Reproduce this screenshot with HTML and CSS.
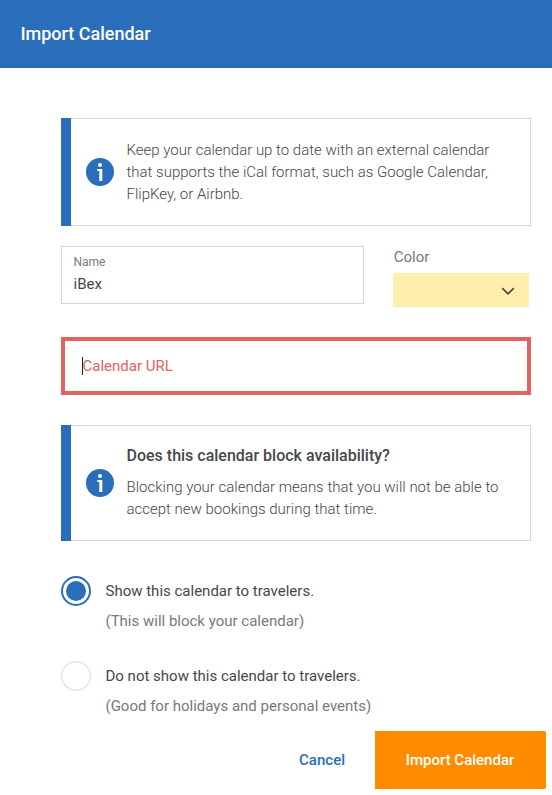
FILE: index.html
```html
<!DOCTYPE html>
<html lang="en">
<head>
    <meta charset="UTF-8">
    <meta name="viewport" content="width=device-width, initial-scale=1.0">
    <title>Import Calendar</title>
    <link rel="stylesheet" href="styles.css">
</head>
<body>
    <header class="modal-header">
        <h1>Import Calendar</h1>
    </header>

    <form class="modal-body">
        <div class="notice">
            <svg class="info-icon" viewBox="0 0 28 28">
                <circle cx="14" cy="14" r="14" fill="#2a6ebb"/>
                <circle cx="14" cy="7.1" r="2" fill="#fff"/>
                <path d="M11.3 11H16.3V23H13.3V13H11.3Z" fill="#fff"/>
            </svg>
            <p>Keep your calendar up to date with an external calendar that supports the iCal format, such as Google Calendar, FlipKey, or Airbnb.</p>
        </div>

        <div class="row">
            <div class="field">
                <label for="name">Name</label>
                <input type="text" id="name" value="iBex">
            </div>
            <div class="color">
                <span class="color-label">Color</span>
                <button type="button" class="color-select" aria-label="Color">
                    <svg width="14" height="8" viewBox="0 0 14 8">
                        <path d="M1.2 1.2L7 6.8L12.8 1.2" fill="none" stroke="#4a4340" stroke-width="1.6"/>
                    </svg>
                </button>
            </div>
        </div>

        <div class="url-field">
            <span class="caret"></span>
            <input type="text" placeholder="Calendar URL">
        </div>

        <div class="notice notice-block">
            <svg class="info-icon" viewBox="0 0 28 28">
                <circle cx="14" cy="14" r="14" fill="#2a6ebb"/>
                <circle cx="14" cy="7.1" r="2" fill="#fff"/>
                <path d="M11.3 11H16.3V23H13.3V13H11.3Z" fill="#fff"/>
            </svg>
            <div>
                <h2>Does this calendar block availability?</h2>
                <p>Blocking your calendar means that you will not be able to accept new bookings during that time.</p>
            </div>
        </div>

        <label class="option">
            <input type="radio" name="visibility" checked>
            <span class="option-text">
                <span>Show this calendar to travelers.</span>
                <span class="hint">(This will block your calendar)</span>
            </span>
        </label>
        <label class="option">
            <input type="radio" name="visibility">
            <span class="option-text">
                <span>Do not show this calendar to travelers.</span>
                <span class="hint">(Good for holidays and personal events)</span>
            </span>
        </label>
    </form>

    <footer class="modal-footer">
        <button type="button" class="btn-cancel">Cancel</button>
        <button type="button" class="btn-import">Import Calendar</button>
    </footer>
</body>
</html>
```

FILE: styles.css
```css
* {
    box-sizing: border-box;
}
body {
    margin: 0;
    background: #fff;
    color: #44484c;
    font-family: Roboto, sans-serif;
    font-size: 15px;
    line-height: 22px;
}
h1, h2, p {
    margin: 0;
}
input, button {
    font: inherit;
    color: inherit;
    border: 0;
    padding: 0;
    background: none;
}
.modal-header {
    display: flex;
    align-items: center;
    height: 68px;
    padding: 0 20.4px;
    background: #2a6ebb;
    color: #fff;
}
.modal-header h1 {
    font-size: 18px;
    font-weight: 500;
}
.modal-body {
    padding: 50px 21px 0 61px;
}
.notice {
    display: flex;
    align-items: center;
    gap: 12.5px;
    height: 108px;
    padding-right: 28px;
    border: 1px solid #d4d6d8;
    border-left: 0;
    font-weight: 300;
}
.notice::before {
    content: '';
    flex: none;
    align-self: stretch;
    width: 10px;
    margin: -1px 2.5px -1px 0;
    background: #2a6ebb;
}
.notice-block {
    height: 116px;
    margin-bottom: 35px;
}
.notice h2 {
    margin-bottom: 9px;
    padding-bottom: 1px;
    font-size: 16px;
    font-weight: 500;
    line-height: 22px;
}
.notice-block p {
    margin: -1px 0 1px;
}
.info-icon {
    flex: none;
    width: 28px;
    height: 28px;
}
.row {
    display: flex;
    gap: 29px;
    margin: 20px 0 30px;
}
.field {
    width: 303px;
    height: 58px;
    padding: 7px 11.5px;
    border: 1px solid #d4d6d8;
}
.field label {
    display: block;
    color: #77797c;
    font-size: 12px;
    line-height: 16px;
}
.field input {
    display: block;
    width: 100%;
    height: 28px;
}
.color {
    width: 136px;
}
.color-label {
    display: block;
    height: 27px;
    padding-left: 0.8px;
    color: #77797c;
}
.color-select {
    display: flex;
    align-items: center;
    justify-content: flex-end;
    width: 100%;
    height: 34px;
    padding: 2px 14px 0 0;
    background: #ffeeac;
}
.url-field {
    display: flex;
    align-items: center;
    height: 58px;
    margin-bottom: 30px;
    padding: 0 17px;
    border: 4px solid #e0635d;
}
.url-field input {
    flex: 1;
    margin-left: -0.5px;
    outline: none;
}
.url-field input::placeholder {
    color: #e0635d;
    opacity: 1;
}
.caret {
    width: 1px;
    height: 18px;
    background: #222;
}
.option {
    display: flex;
    gap: 14.5px;
    height: 60px;
    margin-bottom: 25px;
}
.option input {
    appearance: none;
    flex: none;
    width: 30px;
    height: 30px;
    margin: 0;
    border: 1px solid #d4d6d8;
    border-radius: 50%;
}
.option input:checked {
    padding: 3px;
    border: 2px solid #2a6ebb;
    background: #2a6ebb content-box;
}
.option-text span {
    display: block;
    line-height: 30px;
}
.option-text .hint {
    color: #77797c;
}
.modal-footer {
    display: flex;
    justify-content: flex-end;
    gap: 30px;
    margin-top: -15px;
    padding-right: 6px;
    font-weight: 500;
}
.btn-cancel {
    color: #2a6ebb;
}
.btn-import {
    width: 171px;
    height: 58px;
    padding-right: 1px;
    border-radius: 0 2px 2px 0;
    background: #ff8b00;
    color: #fff;
}
```
